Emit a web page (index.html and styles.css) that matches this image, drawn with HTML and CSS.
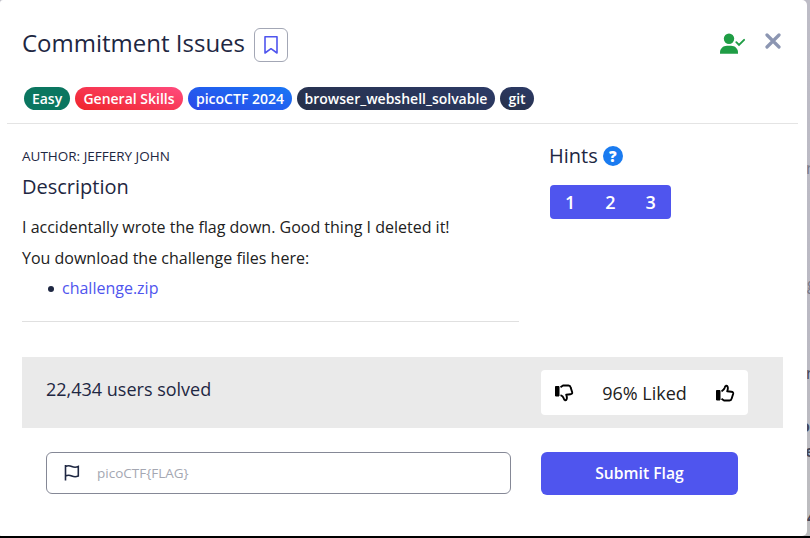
FILE: index.html
```html
<!DOCTYPE html>
<html lang="en">
<head>
<meta charset="utf-8">
<title>Commitment Issues</title>
<link rel="stylesheet" href="styles.css">
</head>
<body>
<div class="behind" aria-hidden="true"><span class="b1">r</span><span class="b2">g</span><span class="b3">r</span><span class="b4">o</span><span class="b5">e</span><span class="b6">4</span></div>
<main class="modal">
  <header class="head">
    <div class="title-row">
      <h1>Commitment Issues</h1>
      <button class="bookmark" aria-label="Bookmark"><svg width="16" height="20" viewBox="0 0 16 20"><path d="M2 1.700h12v16.300l-6-4.300-6 4.300z" fill="none" stroke="#4f55ee" stroke-width="1.600" stroke-linejoin="round"/></svg></button>
      <svg class="solved" width="26" height="22" viewBox="0 0 26 22"><circle cx="9" cy="5.700" r="5.200" fill="#1f9d45"/><path d="M0 20.700v-1.200c0-4 3-6.800 7-6.800h4c4 0 7 2.800 7 6.800v1.200z" fill="#1f9d45"/><path d="M16.300 9.200l2.700 2.700 5.100-5.100" fill="none" stroke="#1f9d45" stroke-width="1.900" stroke-linecap="round"/></svg>
      <button class="close" aria-label="Close"><svg width="16" height="16" viewBox="0 0 16 16"><path d="M2 2l12 12M14 2L2 14" stroke="#8c96b2" stroke-width="3.200" stroke-linecap="round"/></svg></button>
    </div>
    <div class="tags"><span class="tag easy">Easy</span><span class="tag general">General Skills</span><span class="tag event">picoCTF 2024</span><span class="tag dark shell">browser_webshell_solvable</span><span class="tag dark git">git</span></div>
  </header>
  <div class="body">
    <section class="description">
      <p class="author">AUTHOR: JEFFERY JOHN</p>
      <h2>Description</h2>
      <p class="text">I accidentally wrote the flag down. Good thing I deleted it!</p>
      <p class="text second">You download the challenge files here:</p>
      <ul><li><a href="#">challenge.zip</a></li></ul>
    </section>
    <aside class="hints">
      <h2>Hints <span class="help">?</span></h2>
      <div class="hint-buttons"><button>1</button><button>2</button><button>3</button></div>
    </aside>
  </div>
  <div class="stats">
    <span class="count">22,434 users solved</span>
    <div class="rating">
      <svg width="20" height="18" viewBox="0 0 20 18"><path d="M1.500 2.500h3.500v9.500H1.500z" fill="#000" stroke="#000" stroke-linejoin="round"/><path d="M6.500 3.200L9 1.500h5.500q1.800 0 2.100 1.800l1.600 5q.3 1.800-1.800 2l-4.200.4q1 2.500.6 4.100-.4 1.700-1.900 1.400-.8-.2-1.200-2-.6-2.200-3.200-3" fill="none" stroke="#000" stroke-width="1.900" stroke-linejoin="round"/></svg>
      <span>96% Liked</span>
      <svg class="up" width="20" height="18" viewBox="0 0 20 18"><path d="M1.500 6.500h3.500v9.500H1.500z" fill="#000" stroke="#000" stroke-linejoin="round"/><path d="M6.500 14.800L9 16.500h5.500q1.800 0 2.100-1.800l1.600-5q.3-1.800-1.800-2l-4.200-.4q1-2.500.6-4.100-.4-1.700-1.900-1.400-.8.200-1.200 2-.6 2.200-3.200 3.500" fill="none" stroke="#000" stroke-width="1.900" stroke-linejoin="round"/></svg>
    </div>
  </div>
  <div class="submit">
    <label class="field"><svg width="16" height="18" viewBox="0 0 16 18"><path d="M1.500 1v15.500M1.500 2.500q3-1.500 6.300 0t6.500 0v9.500q-3.200 1.500-6.500 0t-6.300 0" fill="none" stroke="#1e2742" stroke-width="1.600"/></svg><input placeholder="picoCTF{FLAG}"></label>
    <button class="send">Submit Flag</button>
  </div>
</main>
</body>
</html>
```
FILE: styles.css
```css
* { box-sizing: border-box; }
body { margin: 0; height: 538px; overflow: hidden; position: relative; background: linear-gradient(#bdbcc6, #bab9c3 60%, #bdbdbf); font-family: "Open Sans", sans-serif; color: #1e2742; border-bottom: 2px solid #000; }
h1, h2, p, ul { margin: 0; font-weight: 400; }
button { font: inherit; border: 0; padding: 0; }
svg { display: block; flex: none; }
.behind span { position: absolute; left: 806px; font-size: 16px; line-height: 20px; color: #444658; }
.behind .b1 { top: 158px; color: #777887; }
.behind .b2 { top: 274px; left: 807px; color: #777887; }
.behind .b3 { top: 363px; }
.behind .b4 { top: 416px; left: 800px; font-weight: 700; }
.behind .b5 { top: 441px; left: 805px; font-weight: 700; }
.behind .b6 { top: 507px; left: 807px; font-weight: 700; }
.modal { position: relative; width: 807px; height: 536px; background: #fff; border-radius: 3px 5px 5px 1px; }
.head { height: 124px; margin: 0 9px 0 7px; padding: 28px 0 0 15px; border-bottom: 1px solid #e4e4e4; }
.title-row { display: flex; align-items: flex-start; height: 59px; }
h1 { font-size: 24px; line-height: 30px; white-space: nowrap; width: 232px; }
.bookmark { width: 34px; height: 34px; border: 1px solid #a3a7b5; border-radius: 6px; background: #fff; display: grid; place-items: center; }
.solved { margin: 5px 0 0 432px; }
.close { margin: 5px 0 0 19px; background: none; }
.tags { display: flex; gap: 5px; padding-left: 2px; }
.tag { height: 23px; border-radius: 12px; color: #fff; font-size: 14px; line-height: 23px; font-weight: 600; text-align: center; white-space: nowrap; }
.easy { width: 46px; background: #0b7660; }
.general { width: 108px; background: linear-gradient(15deg, #ef2429, #ff4b7e); }
.event { width: 104px; background: linear-gradient(15deg, #2b47e8, #1976f5); }
.dark { background: linear-gradient(15deg, #263049, #2c3a66); }
.shell { width: 198px; }
.git { width: 34px; }
.body { display: flex; height: 233px; padding: 21px 24px 0 22px; }
.description { width: 497px; height: 177px; border-bottom: 1px solid #e0e0e0; }
.author { font-size: 13.5px; line-height: 22px; }
h2 { font-size: 20px; line-height: 26px; }
.description h2 { margin-top: 7px; }
.text { font-size: 16px; line-height: 24px; color: #212121; margin-top: 15px; }
.second { margin-top: 7px; }
ul { list-style: none; padding-left: 26px; margin-top: 6px; font-size: 16px; line-height: 24px; }
li { display: flex; align-items: center; }
li::before { content: ""; width: 6px; height: 6px; margin: 2px 8px 0 0; border-radius: 50%; background: #1e2742; }
a { color: #4f55ee; text-decoration: none; }
.hints { padding-left: 30px; }
.hints h2 { display: flex; align-items: center; line-height: 22px; }
.help { width: 20px; height: 20px; margin-left: 5px; border-radius: 50%; background: #1a7bf0; color: #fff; font-size: 15px; line-height: 20px; font-weight: 800; text-align: center; }
.hint-buttons { display: flex; width: 121px; height: 34px; margin: 18px 0 0 1px; background: #4f55ee; border-radius: 4px; }
.hint-buttons button { width: 40.3px; background: none; color: #fff; font-size: 18px; font-weight: 600; }
.stats { display: flex; justify-content: space-between; margin: 0 24px 0 22px; height: 71px; padding: 13px 35px 0 24px; background: #eaeaea; }
.count { font-size: 18px; line-height: 38px; }
.rating { width: 207px; height: 45px; padding: 0 13px; display: flex; align-items: center; justify-content: space-between; background: #fff; border-radius: 4px; font-size: 18px; color: #212121; }
.submit { display: flex; gap: 30px; padding: 24px 0 0 46px; }
.field { width: 465px; height: 42px; border: 1px solid #858896; border-radius: 6px; display: flex; align-items: center; padding-left: 17px; }
input { border: 0; outline: 0; background: none; padding: 0 0 1px; margin-left: 17px; font: 13.5px "Open Sans", sans-serif; width: 350px; }
input::placeholder { color: #a4a7b2; }
.send { width: 197px; height: 43px; padding-bottom: 2px; border-radius: 6px; background: #4f55ee; color: #fff; font-size: 15.7px; font-weight: 600; }
```
